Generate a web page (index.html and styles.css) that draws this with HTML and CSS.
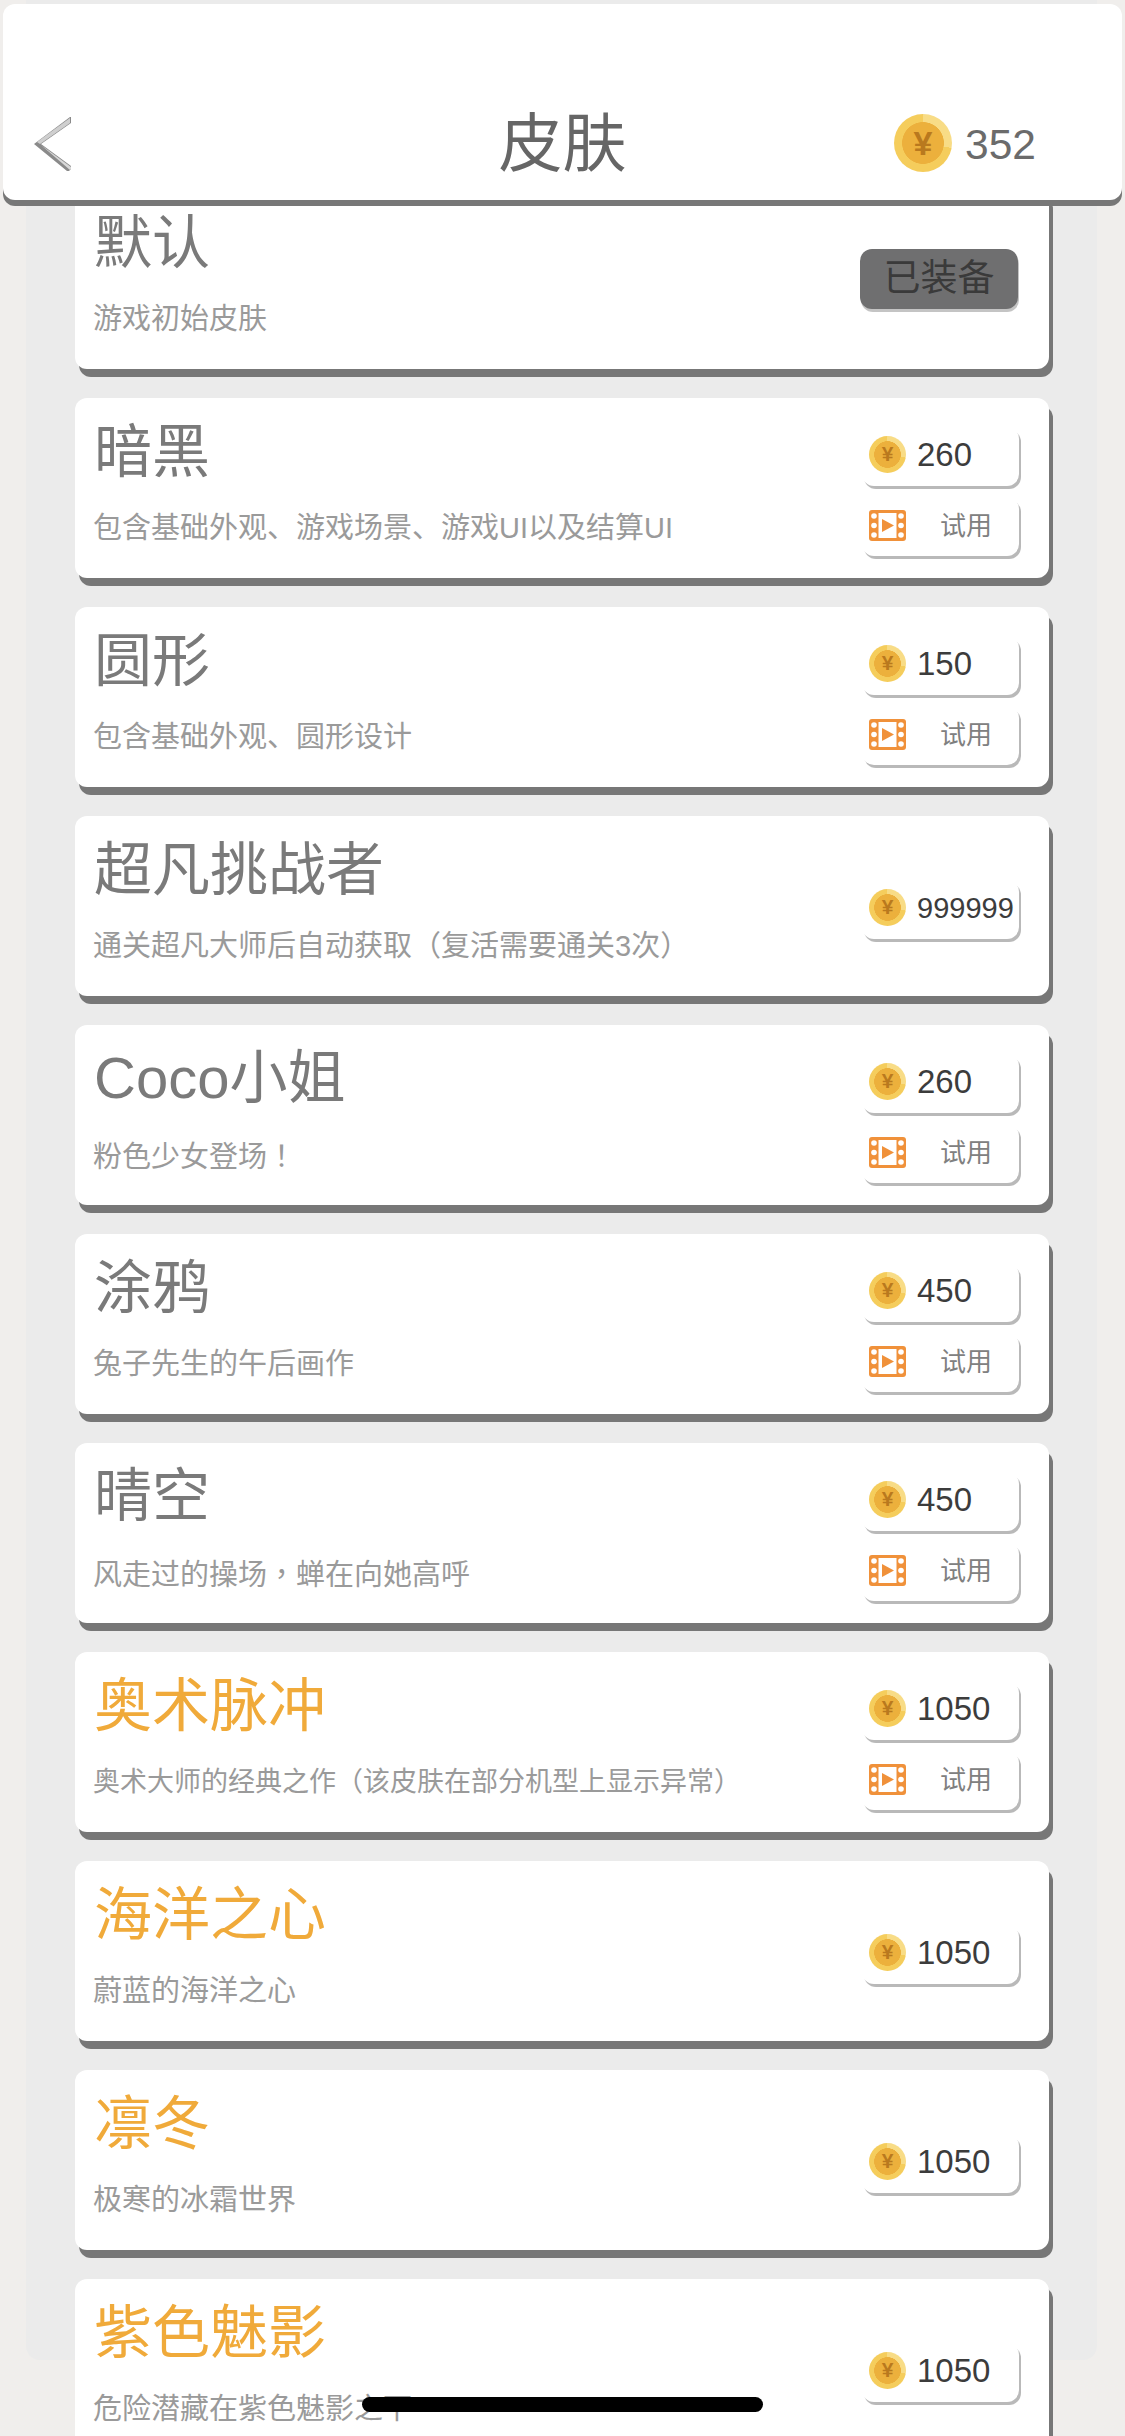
FILE: index.html
```html
<!DOCTYPE html>
<html lang="zh-CN">
<head>
    <meta charset="UTF-8">
    <title>皮肤</title>
    <link rel="stylesheet" href="styles.css">
</head>
<body>
    <svg class="defs" width="0" height="0">
        <symbol id="film" viewBox="0 0 37 31">
            <rect width="37" height="31" rx="3" fill="#f0913a"/>
            <rect x="9.5" y="3" width="18" height="25" fill="#fff"/>
            <circle cx="5" cy="6" r="2.8" fill="#fff"/>
            <circle cx="5" cy="15.5" r="2.8" fill="#fff"/>
            <circle cx="5" cy="25" r="2.8" fill="#fff"/>
            <circle cx="32" cy="6" r="2.8" fill="#fff"/>
            <circle cx="32" cy="15.5" r="2.8" fill="#fff"/>
            <circle cx="32" cy="25" r="2.8" fill="#fff"/>
            <path d="M13 9l12 6.500-12 6.500z" fill="#f0913a"/>
        </symbol>
    </svg>

    <header class="topbar">
        <svg class="back" width="38" height="54" viewBox="0 0 38 54">
            <path d="M36 0h1v6L7 27l30 22v3l-2 2h-2L0 27z" fill="#8a8a8a"/>
            <path d="M36 1v5L6 27 3 25z" fill="#cfcfcf"/>
            <path d="M7 28l30 22v2l-1 1z" fill="#d8d8d8"/>
        </svg>
        <h1 class="topbar-title">皮肤</h1>
        <div class="wallet">
            <span class="coin coin-big">¥</span>
            <span class="wallet-count">352</span>
        </div>
    </header>

    <main class="panel">
        <div class="skin-list">
            <section class="skin">
                <div class="skin-text">
                    <h2 class="skin-name">默认</h2>
                    <p class="skin-desc">游戏初始皮肤</p>
                </div>
                <div class="skin-actions">
                    <div class="equipped">已装备</div>
                </div>
            </section>

            <section class="skin">
                <div class="skin-text">
                    <h2 class="skin-name">暗黑</h2>
                    <p class="skin-desc">包含基础外观、游戏场景、游戏UI以及结算UI</p>
                </div>
                <div class="skin-actions">
                    <div class="btn"><span class="coin">¥</span><span class="price">260</span></div>
                    <div class="btn"><svg class="film"><use href="#film"/></svg><span class="try">试用</span></div>
                </div>
            </section>

            <section class="skin">
                <div class="skin-text">
                    <h2 class="skin-name">圆形</h2>
                    <p class="skin-desc">包含基础外观、圆形设计</p>
                </div>
                <div class="skin-actions">
                    <div class="btn"><span class="coin">¥</span><span class="price">150</span></div>
                    <div class="btn"><svg class="film"><use href="#film"/></svg><span class="try">试用</span></div>
                </div>
            </section>

            <section class="skin">
                <div class="skin-text">
                    <h2 class="skin-name">超凡挑战者</h2>
                    <p class="skin-desc">通关超凡大师后自动获取（复活需要通关3次）</p>
                </div>
                <div class="skin-actions">
                    <div class="btn"><span class="coin">¥</span><span class="price small">999999</span></div>
                </div>
            </section>

            <section class="skin">
                <div class="skin-text">
                    <h2 class="skin-name">Coco小姐</h2>
                    <p class="skin-desc">粉色少女登场<span class="punct" lang="zh-TW">！</span></p>
                </div>
                <div class="skin-actions">
                    <div class="btn"><span class="coin">¥</span><span class="price">260</span></div>
                    <div class="btn"><svg class="film"><use href="#film"/></svg><span class="try">试用</span></div>
                </div>
            </section>

            <section class="skin">
                <div class="skin-text">
                    <h2 class="skin-name">涂鸦</h2>
                    <p class="skin-desc">兔子先生的午后画作</p>
                </div>
                <div class="skin-actions">
                    <div class="btn"><span class="coin">¥</span><span class="price">450</span></div>
                    <div class="btn"><svg class="film"><use href="#film"/></svg><span class="try">试用</span></div>
                </div>
            </section>

            <section class="skin">
                <div class="skin-text">
                    <h2 class="skin-name">晴空</h2>
                    <p class="skin-desc">风走过的操场<span class="punct" lang="zh-TW">，</span>蝉在向她高呼</p>
                </div>
                <div class="skin-actions">
                    <div class="btn"><span class="coin">¥</span><span class="price">450</span></div>
                    <div class="btn"><svg class="film"><use href="#film"/></svg><span class="try">试用</span></div>
                </div>
            </section>

            <section class="skin">
                <div class="skin-text">
                    <h2 class="skin-name gold">奥术脉冲</h2>
                    <p class="skin-desc long">奥术大师的经典之作（该皮肤在部分机型上显示异常）</p>
                </div>
                <div class="skin-actions">
                    <div class="btn"><span class="coin">¥</span><span class="price">1050</span></div>
                    <div class="btn"><svg class="film"><use href="#film"/></svg><span class="try">试用</span></div>
                </div>
            </section>

            <section class="skin">
                <div class="skin-text">
                    <h2 class="skin-name gold">海洋之心</h2>
                    <p class="skin-desc">蔚蓝的海洋之心</p>
                </div>
                <div class="skin-actions">
                    <div class="btn"><span class="coin">¥</span><span class="price">1050</span></div>
                </div>
            </section>

            <section class="skin">
                <div class="skin-text">
                    <h2 class="skin-name gold">凛冬</h2>
                    <p class="skin-desc">极寒的冰霜世界</p>
                </div>
                <div class="skin-actions">
                    <div class="btn"><span class="coin">¥</span><span class="price">1050</span></div>
                </div>
            </section>

            <section class="skin">
                <div class="skin-text">
                    <h2 class="skin-name gold">紫色魅影</h2>
                    <p class="skin-desc">危险潜藏在紫色魅影之下</p>
                </div>
                <div class="skin-actions">
                    <div class="btn"><span class="coin">¥</span><span class="price">1050</span></div>
                </div>
            </section>
        </div>
    </main>

    <div class="home-bar"></div>
</body>
</html>
```

FILE: styles.css
```css
html, body { margin: 0; padding: 0; }
body {
    position: relative;
    height: 2436px;
    overflow: hidden;
    background-color: #f0eeec;
    font-family: "Liberation Sans", "Noto Sans CJK SC", sans-serif;
}
h1, h2, p { margin: 0; font-weight: normal; }
.defs { position: absolute; }

/* top bar sits over the scrolling list */
.topbar {
    position: absolute;
    top: 4px;
    left: 3px;
    right: 3px;
    z-index: 2;
    height: 196px;
    background-color: #fff;
    border-radius: 12px;
    box-shadow: 0 6px 0 #777;
}
.back { position: absolute; left: 31px; top: 113px; }
.topbar-title {
    position: absolute;
    left: 0;
    right: 0;
    top: 100px;
    text-align: center;
    font-size: 64px;
    line-height: 80px;
    color: #666;
}
.wallet {
    position: absolute;
    left: 891px;
    top: 110px;
    display: flex;
    align-items: center;
    gap: 13px;
    font-size: 42.5px;
    color: #6b6b6b;
}
.wallet-count { margin-top: 3px; }

.coin {
    flex: none;
    display: flex;
    align-items: center;
    justify-content: center;
    width: 37px;
    height: 37px;
    border-radius: 50%;
    font-size: 21px;
    font-weight: bold;
    color: #b9791e;
    background:
        radial-gradient(circle closest-side, #ecb03c 0 71%, transparent 73%),
        conic-gradient(#f8dc86 0 100deg, #f5cd5c 100deg 360deg);
}
.coin-big { width: 58px; height: 58px; font-size: 34px; }

.panel {
    height: 2360px;
    margin: 0 28px 0 26px;
    box-sizing: border-box;
    padding: 189px 48px 0 49px;
    background-color: #ebebeb;
    border-radius: 0 0 14px 14px;
}
.skin-list { display: flex; flex-direction: column; gap: 29px; }
.skin {
    flex: none;
    display: flex;
    align-items: center;
    justify-content: space-between;
    height: 180px;
    box-sizing: border-box;
    padding: 0 30px 0 18px;
    background-color: #fff;
    border-radius: 12px;
    box-shadow: 4px 8px 0 #777;
}
.skin-text { display: flex; flex-direction: column; }
.skin-name {
    font-size: 58px;
    line-height: 70px;
    color: #7a7a7a;
    margin: -13px 0 0 1px;
}
.skin-name.gold { color: #f0aa3a; }
.skin-desc {
    margin-top: 23px;
    font-size: 29px;
    line-height: 36px;
    color: #9a9a9a;
}
.skin-desc.long { font-size: 27px; }
.punct { font-family: "Noto Sans CJK TC", sans-serif; }
.skin-actions { display: flex; flex-direction: column; gap: 11px; width: 157px; margin-top: 6px; }
.btn {
    display: flex;
    align-items: center;
    height: 59px;
    box-sizing: border-box;
    padding: 0 0 4px 7px;
    background-color: #fff;
    border-radius: 12px;
    box-shadow: 2px 3px 0 #b9b9b9;
}
.price { margin: 2px 0 0 11px; font-size: 33px; color: #3c3c3c; }
.price.small { font-size: 29px; }
.film { flex: none; width: 37px; height: 31px; margin-top: 2px; }
.try { margin: -2px 0 0 34px; font-size: 26px; color: #808080; }
.equipped {
    height: 60px;
    margin: -6px 1px 0 -2px;
    line-height: 60px;
    text-align: center;
    font-size: 37px;
    color: #3a3a3a;
    background-color: #6f6f70;
    border-radius: 12px;
    box-shadow: 1px 3px 0 #c4c4c4;
}

.home-bar {
    position: absolute;
    left: 362px;
    top: 2397px;
    width: 401px;
    height: 15px;
    z-index: 3;
    background-color: #000;
    border-radius: 8px;
}
```
